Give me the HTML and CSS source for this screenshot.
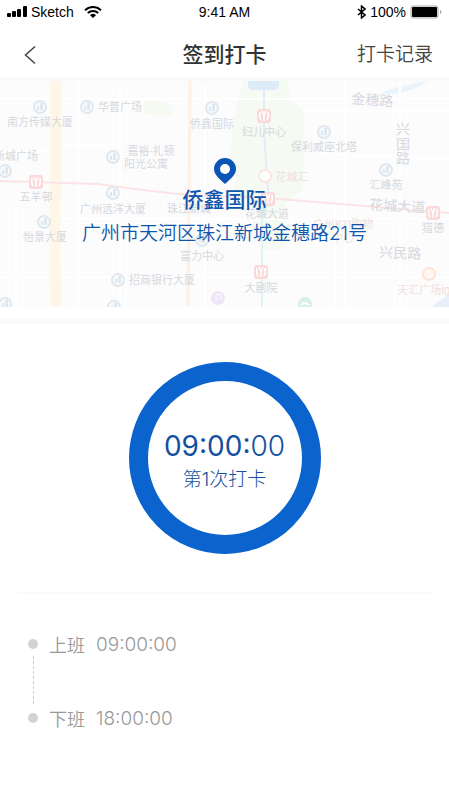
FILE: index.html
```html
<!DOCTYPE html>
<html lang="zh-CN">
<head>
  <meta charset="UTF-8">
  <title>签到打卡</title>
  <meta name="viewport" content="width=device-width, initial-scale=1.0">
  <link rel="stylesheet" href="styles.css">
</head>
<body>

<!-- Status bar -->
<div class="status">
  <div class="status-left">
    <svg width="20" height="12" viewBox="0 0 20 12" aria-hidden="true">
      <rect x="0" y="7" width="4" height="4" rx="1"/>
      <rect x="5" y="5" width="4" height="6" rx="1"/>
      <rect x="10" y="3" width="4" height="8" rx="1"/>
      <rect x="16" y="0" width="4" height="11" rx="1"/>
    </svg>
    <span>Sketch</span>
    <svg class="wifi" width="18" height="12" viewBox="0 0 18 12" aria-hidden="true">
      <path d="M1 4.2a11.5 11.5 0 0 1 16 0M3.8 7a7.5 7.5 0 0 1 10.4 0" fill="none" stroke="#000" stroke-width="2"/>
      <path d="M6 9.2a4.3 4.3 0 0 1 6 0l-3 2.8z"/>
    </svg>
  </div>
  <div class="status-time">9:41 AM</div>
  <div class="status-right">
    <svg width="9" height="14" viewBox="0 0 9 14" aria-hidden="true">
      <path d="M1 4l7 6-3.500 3V1L8 4l-7 6" fill="none" stroke="#000" stroke-width="1.500"/>
    </svg>
    <span>100%</span>
    <svg width="32" height="14" viewBox="0 0 32 14" aria-hidden="true">
      <rect x="1" y="1" width="27" height="12" rx="2" fill="#fff" stroke="#a5a5a5"/>
      <rect x="2" y="2" width="25" height="10" rx="1"/>
      <path d="M30 5v4q1.500-.5 1.500-2T30 5z" fill="#a5a5a5"/>
    </svg>
  </div>
</div>

<!-- Title bar -->
<header class="nav">
  <button class="back" type="button" aria-label="返回">
    <svg width="12" height="20" viewBox="0 0 12 20" aria-hidden="true">
      <path d="M11 1.500L1.500 10l9.500 8.500" fill="none" stroke="#444" stroke-width="1.500"/>
    </svg>
  </button>
  <h1>签到打卡</h1>
  <a class="records" href="#records">打卡记录</a>
</header>

<main>
  <!-- Location -->
  <section class="location">
    <svg class="map" viewBox="0 81 449 226" preserveAspectRatio="xMidYMid slice" aria-hidden="true">
      <defs>
        <g id="building">
          <circle r="6" fill="#f8fbfd" stroke="#dfe8ef" stroke-width="2"/>
          <path d="M-3 3v-4h2v4zM0 3v-7h3v7z" fill="#dfe8ef"/>
        </g>
        <g id="metro">
          <rect x="-7" y="-7" width="14" height="14" rx="3" fill="#fad9d9"/>
          <path d="M-2-5l2 5 2-5M0 0v5M-4-4q-1 5 1 8M4-4q1 5-1 8" fill="none" stroke="#fff" stroke-width="1.500"/>
        </g>
      </defs>
      <rect y="81" width="449" height="226" fill="#fcfcfd"/>
      <!-- parks and water -->
      <path d="M243 81h45l2 16 14 14-1 78-18 14-2 20 4 18-6 9h-20l-8-20 3-20-23-14 3-20-6-24 5-40z" fill="#f5faf3"/>
      <path d="M144 101h18q11 3 10 15l-28-2z" fill="#f5faf3"/>
      <path d="M382 92q24-8 46-11l-10 6q-16 7-30 7z" fill="#ecf4fb"/>
      <path d="M431 307l18-13v13z" fill="#e8eefa"/>
      <rect x="248" y="75" width="31" height="15" rx="5" fill="#dcebf8"/>
      <!-- minor streets -->
      <g fill="none" stroke="#fff" stroke-width="2">
        <path d="M0 151h50M62 145h57M78 81v226M120 81v226M16 205v102M0 277h449M62 219h387M126 270v37M303 111h146M320 154l129 5M345 81v226M335 205v102M400 81v226M205 84v222M0 99h449M395 285v22"/>
      </g>
      <!-- main streets -->
      <path d="M56 81v93l-1 28v60l1 45" fill="none" stroke="#fef7e8" stroke-width="11"/>
      <path d="M190 81l-2 226" fill="none" stroke="#fff0e4" stroke-width="3"/>
      <path d="M264 82v50q2 30 4 60l-6 23v92" fill="none" stroke="#e1ecf8" stroke-width="2"/>
      <path d="M262 215v92" fill="none" stroke="#dff3f1" stroke-width="2"/>
      <path d="M0 181l98 3q48 7 92 11l78 3 181 15" fill="none" stroke="#fce3e5" stroke-width="2"/>
      <!-- places -->
      <use href="#building" x="40" y="107"/>
      <use href="#building" x="87" y="107"/>
      <use href="#building" x="113" y="157"/>
      <use href="#building" x="5" y="171"/>
      <use href="#building" x="113" y="193"/>
      <use href="#building" x="212" y="108"/>
      <use href="#building" x="324" y="132"/>
      <use href="#building" x="386" y="170"/>
      <use href="#building" x="44" y="222"/>
      <use href="#building" x="118" y="280"/>
      <use href="#building" x="5" y="304"/>
      <use href="#building" x="114" y="307"/>
      <use href="#building" x="202" y="240"/>
      <use href="#metro" x="36" y="182"/>
      <use href="#metro" x="264" y="116"/>
      <use href="#metro" x="261" y="272"/>
      <use href="#metro" x="433" y="213"/>
      <use href="#metro" x="268" y="199"/>
      <circle cx="265" cy="176" r="6" fill="#fff" stroke="#fbe6df" stroke-width="2"/>
      <circle cx="429" cy="274" r="6" fill="#fff7f0" stroke="#fde3d3" stroke-width="2"/>
      <circle cx="218" cy="298" r="7" fill="#eee5f8"/>
      <path d="M216 301v-6l5-1v6" fill="none" stroke="#fff"/>
      <circle cx="305" cy="304" r="7" fill="#d9f0e6"/>
      <path d="M301 305q4-4 8 0" fill="none" stroke="#fff" stroke-width="2"/>
      <g class="labels">
        <text x="40" y="126">南方传媒大厦</text>
        <text x="120" y="111">华普广场</text>
        <text x="212" y="128">侨鑫国际</text>
        <text x="264" y="136">妇儿中心</text>
        <text x="151" y="155">嘉裕·礼顿</text>
        <text x="146" y="168">阳光公寓</text>
        <text x="16" y="160">新城广场</text>
        <text x="36" y="201">五羊邨</text>
        <text x="113" y="213">广州远洋大厦</text>
        <text x="189" y="213">珠江新城</text>
        <text x="267" y="218">花城大道</text>
        <text x="45" y="241">怡景大厦</text>
        <text x="202" y="260">富力中心</text>
        <text x="162" y="284">招商银行大厦</text>
        <text x="261" y="292">大剧院</text>
        <text x="324" y="151">保利威座北塔</text>
        <text x="386" y="189">汇峰苑</text>
        <text x="433" y="232">猎德</text>
        <text class="road" x="372" y="105" transform="rotate(4 372 105)">金穗路</text>
        <text class="road" x="403" y="134">兴</text>
        <text class="road" x="403" y="149">国</text>
        <text class="road" x="403" y="163">路</text>
        <text class="road" x="397" y="211" transform="rotate(3 397 211)">花城大道</text>
        <text class="road" x="400" y="258" transform="rotate(3 400 258)">兴民路</text>
        <text class="warm" x="292" y="181">花城汇</text>
        <text class="warm" x="343" y="228">广州K11购物</text>
        <text class="warm" x="343" y="242">中心</text>
        <text class="warm" x="427" y="294">天汇广场igc</text>
      </g>
    </svg>
    <div class="place">
      <svg width="22" height="26" viewBox="0 0 22 26" aria-hidden="true">
        <path d="M11 0a11 11 0 0 1 11 11c0 6-6 10-11 15C6 21 0 17 0 11A11 11 0 0 1 11 0z" fill="#0b55b5"/>
        <circle cx="11" cy="11" r="5" fill="#fff"/>
      </svg>
      <h2>侨鑫国际</h2>
      <p>广州市天河区珠江新城金穗路21号</p>
    </div>
  </section>

  <!-- Punch button -->
  <section class="punch">
    <button class="punch-button" type="button">
      <span class="punch-time">09:00:<span class="seconds">00</span></span>
      <span class="punch-label">第1次打卡</span>
    </button>
  </section>

  <!-- Working hours -->
  <ul class="shifts">
    <li><span>上班</span><time>09:00:00</time></li>
    <li><span>下班</span><time>18:00:00</time></li>
  </ul>
</main>

</body>
</html>
```
FILE: styles.css
```css
* {
  box-sizing: border-box;
}

body {
  margin: 0;
  background: #fff;
  color: #333;
  font-family: Inter, "Noto Sans CJK SC", sans-serif;
}

h1, h2, p, ul {
  margin: 0;
  padding: 0;
}

button {
  border: none;
  background: none;
  padding: 0;
  font-family: inherit;
  cursor: pointer;
}

.status {
  display: grid;
  grid-template-columns: 1fr auto 1fr;
  align-items: center;
  height: 24px;
  padding: 0 7px;
  font: 14px/24px "Liberation Sans", Arial, sans-serif;
  color: #000;
}

.status-left,
.status-right {
  display: flex;
  align-items: center;
  gap: 4px;
}

.status-right {
  justify-content: flex-end;
}

.wifi {
  margin-left: 6px;
}

.nav {
  display: grid;
  grid-template-columns: 1fr auto 1fr;
  align-items: center;
  height: 57px;
  padding: 8px 16px 0;
  border-bottom: 4px solid #fafafa;
}

.back {
  display: flex;
  width: 24px;
  margin-left: 8px;
}

.nav h1 {
  font-size: 21px;
  font-weight: 500;
  line-height: 32px;
}

.records {
  justify-self: end;
  font-size: 19px;
  font-weight: 350;
  line-height: 32px;
  color: #444;
  text-decoration: none;
}

.location {
  position: relative;
  padding-bottom: 12px;
  border-bottom: 5px solid #fafafa;
}

.map {
  display: block;
  width: 100%;
  height: 226px;
}

.labels {
  font-size: 11px;
  text-anchor: middle;
  fill: #d6d8dd;
}

.labels .road {
  font-size: 14px;
}

.labels .warm {
  fill: #efdfdc;
}

.place {
  position: absolute;
  top: 77px;
  left: 0;
  width: 100%;
  text-align: center;
  color: #0d56ac;
}

.place svg {
  display: block;
  margin: 0 auto;
}

.place h2 {
  font-size: 21px;
  font-weight: 500;
  line-height: 32px;
}

.place p {
  font-size: 19px;
  font-weight: 350;
  line-height: 36px;
}

.punch {
  display: flex;
  justify-content: center;
  margin: 0 18px;
  padding: 38px 0;
  border-bottom: 2px solid #fafafa;
}

.punch-button {
  display: flex;
  flex-direction: column;
  align-items: center;
  justify-content: center;
  width: 192px;
  height: 192px;
  padding-top: 7px;
  border: 19px solid #0b63ce;
  border-radius: 50%;
  color: #1450a0;
}

.punch-time {
  font-size: 28px;
  line-height: 36px;
}

.seconds {
  font-weight: 300;
}

.punch-label {
  font-size: 19px;
  font-weight: 300;
  line-height: 32px;
}

.shifts {
  padding: 34px 28px;
  list-style: none;
}

.shifts li {
  position: relative;
  display: flex;
  align-items: center;
  gap: 11px;
  height: 32px;
  font-size: 18px;
  font-weight: 350;
  color: #999;
}

.shifts time {
  font-size: 19px;
  font-weight: 300;
}

.shifts li + li {
  margin-top: 42px;
}

.shifts li::before {
  content: "";
  width: 10px;
  height: 10px;
  border-radius: 50%;
  background: #d3d3d3;
}

/* dashed line that joins the two shifts */
.shifts li + li::after {
  content: "";
  position: absolute;
  left: 5px;
  bottom: 30px;
  height: 48px;
  border-left: 1px dashed #ccc;
}
```
